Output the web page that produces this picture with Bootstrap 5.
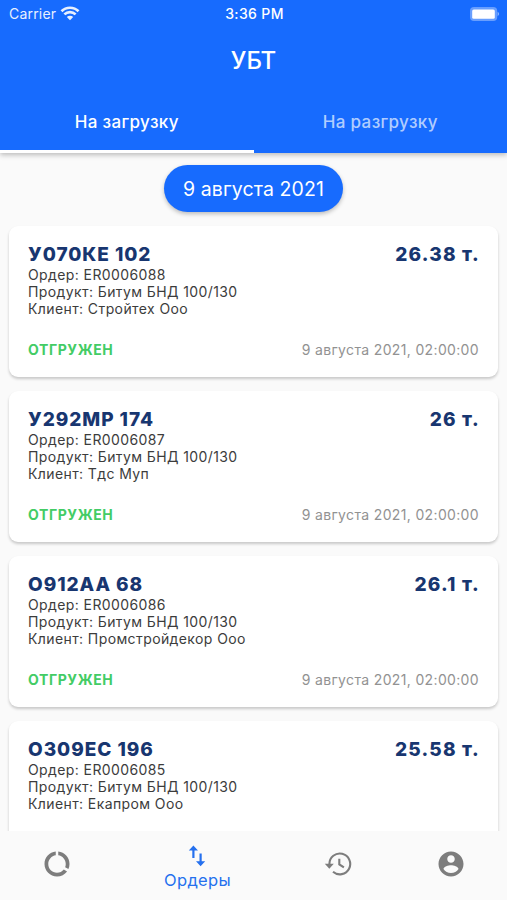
<!DOCTYPE html>
<html lang="ru">
<head>
<meta charset="utf-8">
<meta name="viewport" content="width=device-width, initial-scale=1">
<title>УБТ</title>
<link href="https://cdn.jsdelivr.net/npm/bootstrap@5.3.0/dist/css/bootstrap.min.css" rel="stylesheet">
<style>
  body { font-family: Inter, "Noto Sans", sans-serif; background: #fafafa; height: 900px; color: #3c3c3c; }
  .app-head { background: #176bfe; height: 153px; box-shadow: 0 2px 5px rgba(0,0,0,.25); z-index: 2; }
  .status { height: 27px; font-size: 14px; padding: 0 7px 0 9px; }
  .status > * { flex: 1 1 0; }
  .carrier { letter-spacing: .2px; opacity: .9; }
  .clock { font-size: 14px; font-weight: 500; letter-spacing: .35px; }
  .app-title { height: 64px; font-size: 24px; font-weight: 500; line-height: 67px; }
  .tab { height: 62px; line-height: 62px; font-size: 17px; font-weight: 500; letter-spacing: .35px; color: rgba(255,255,255,.68); }
  .tab.on { color: #fff; border-bottom: 3px solid #fff; }
  .feed { padding: 12px 9px 0; }
  .day { width: 179px; height: 47px; line-height: 48px; border-radius: 24px; background: #176bfe; font-size: 19.5px; letter-spacing: .1px; box-shadow: 0 2px 4px rgba(0,0,0,.25); margin-bottom: 14px; }
  .order { height: 151px; margin-bottom: 14px; padding: 17px 19px 0; border-radius: 9px; box-shadow: 0 2px 3px rgba(0,0,0,.2); }
  .plate { height: 23px; line-height: 24px; font-size: 19px; font-weight: 800; letter-spacing: .95px; color: #183670; }
  .plate span + span { margin-right: -1px; letter-spacing: 1.2px; }
  .info { font-size: 14px; line-height: 17.1px; letter-spacing: .4px; }
  .foot { margin-top: 24px; line-height: 18px; font-size: 14px; letter-spacing: .35px; color: #929292; }
  .done { color: #43cc65; font-weight: 700; letter-spacing: .6px; }
  .tabbar { height: 69px; background: #fafafa; color: #7d7d7d; z-index: 2; }
  .tabbar .side { padding-bottom: 3px; }
  .current { color: #2570ee; font-size: 16.5px; line-height: 20px; letter-spacing: .3px; }
</style>
</head>
<body class="d-flex flex-column overflow-hidden">
<header class="app-head position-relative flex-shrink-0 text-white">
  <div class="status d-flex align-items-center">
    <div class="carrier d-flex align-items-center">Carrier
      <svg class="ms-1" width="20" height="15" viewBox="0 0 20 15" fill="none" stroke="#fff" stroke-width="2.7"><path d="M1.5 5.3a12 12 0 0 1 17 0M4.4 8.4a8 8 0 0 1 11.2 0"/><path d="M10 14.2 6.8 11a4.5 4.5 0 0 1 6.4 0z" fill="#fff" stroke="none"/></svg>
    </div>
    <div class="clock text-center">3:36 PM</div>
    <div class="d-flex justify-content-end">
      <svg width="31" height="14" viewBox="0 0 31 14"><rect x="1" y="0" width="27.2" height="14" rx="4" fill="#fff" fill-opacity=".35"/><rect x="3.2" y="2.4" width="22.6" height="9.4" rx="1.6" fill="#fff"/><path d="M28.6 4.8q3 2.2 0 4.4z" fill="#fff" fill-opacity=".5"/></svg>
    </div>
  </div>
  <div class="app-title text-center">УБТ</div>
  <div class="row g-0 text-center">
    <div class="col tab on">На загрузку</div>
    <div class="col tab">На разгрузку</div>
  </div>
</header>

<main class="feed flex-grow-1 overflow-hidden">
  <div class="day mx-auto text-center text-white">9 августа 2021</div>

  <article class="order bg-white">
    <div class="plate d-flex justify-content-between"><span>У070КЕ 102</span><span>26.38 т.</span></div>
    <div class="info">Ордер: ER0006088<br>Продукт: Битум БНД 100/130<br>Клиент: Стройтех Ооо</div>
    <div class="foot d-flex justify-content-between"><span class="done">ОТГРУЖЕН</span><span>9 августа 2021, 02:00:00</span></div>
  </article>
  <article class="order bg-white">
    <div class="plate d-flex justify-content-between"><span>У292МР 174</span><span>26 т.</span></div>
    <div class="info">Ордер: ER0006087<br>Продукт: Битум БНД 100/130<br>Клиент: Тдс Муп</div>
    <div class="foot d-flex justify-content-between"><span class="done">ОТГРУЖЕН</span><span>9 августа 2021, 02:00:00</span></div>
  </article>
  <article class="order bg-white">
    <div class="plate d-flex justify-content-between"><span>О912АА 68</span><span>26.1 т.</span></div>
    <div class="info">Ордер: ER0006086<br>Продукт: Битум БНД 100/130<br>Клиент: Промстройдекор Ооо</div>
    <div class="foot d-flex justify-content-between"><span class="done">ОТГРУЖЕН</span><span>9 августа 2021, 02:00:00</span></div>
  </article>
  <article class="order bg-white">
    <div class="plate d-flex justify-content-between"><span>О309ЕС 196</span><span>25.58 т.</span></div>
    <div class="info">Ордер: ER0006085<br>Продукт: Битум БНД 100/130<br>Клиент: Екапром Ооо</div>
  </article>
</main>

<nav class="tabbar d-flex flex-shrink-0 position-relative" aria-label="Разделы">
  <div class="side d-flex align-items-center justify-content-center" style="width:22.4%">
    <svg width="30" height="30" viewBox="0 0 24 24" fill="currentColor"><path d="M13 2.05v3.03c3.39.49 6 3.39 6 6.92 0 .9-.18 1.75-.48 2.54l2.6 1.53c.56-1.24.88-2.62.88-4.07 0-5.18-3.95-9.45-9-9.95zM12 19c-3.87 0-7-3.13-7-7 0-3.53 2.61-6.43 6-6.92V2.05c-5.06.5-9 4.76-9 9.95 0 5.52 4.47 10 9.99 10 3.31 0 6.24-1.61 8.06-4.09l-2.6-1.53C16.17 17.98 14.21 19 12 19z"/></svg>
  </div>
  <div class="current d-flex flex-column align-items-center pt-2" style="width:33.1%">
    <svg class="mt-1" width="18" height="27" viewBox="0 0 18 27" fill="none" stroke="currentColor" stroke-width="2.2"><path d="M5.4 15V5M12.6 10.5v10"/><path d="M.8 7.6 5.4 2.6 10 7.6zM8 18.2l4.6 5 4.6-5z" fill="currentColor" stroke="none"/></svg>
    <span>Ордеры</span>
  </div>
  <div class="side d-flex align-items-center justify-content-center" style="width:22.4%">
    <svg width="28" height="28" viewBox="0 0 28 28" fill="none" stroke="currentColor" stroke-width="2.1"><path d="M5.4 14A10.4 10.4 0 1 1 9 21.8M15.3 8.7v5.7l4.6 3"/><path d="M.8 13.8h9l-4.5 5z" fill="currentColor" stroke="none"/></svg>
  </div>
  <div class="side d-flex align-items-center justify-content-center" style="width:22.1%">
    <svg width="30" height="30" viewBox="0 0 24 24" fill="currentColor"><path d="M12 2C6.48 2 2 6.48 2 12s4.48 10 10 10 10-4.48 10-10S17.52 2 12 2zm0 3c1.66 0 3 1.34 3 3s-1.34 3-3 3-3-1.34-3-3 1.34-3 3-3zm0 14.2c-2.5 0-4.71-1.28-6-3.22.03-1.99 4-3.08 6-3.08 1.99 0 5.97 1.09 6 3.08-1.29 1.94-3.5 3.22-6 3.22z"/></svg>
  </div>
</nav>
<script src="https://cdn.jsdelivr.net/npm/bootstrap@5.3.0/dist/js/bootstrap.bundle.min.js"></script>
</body>
</html>
